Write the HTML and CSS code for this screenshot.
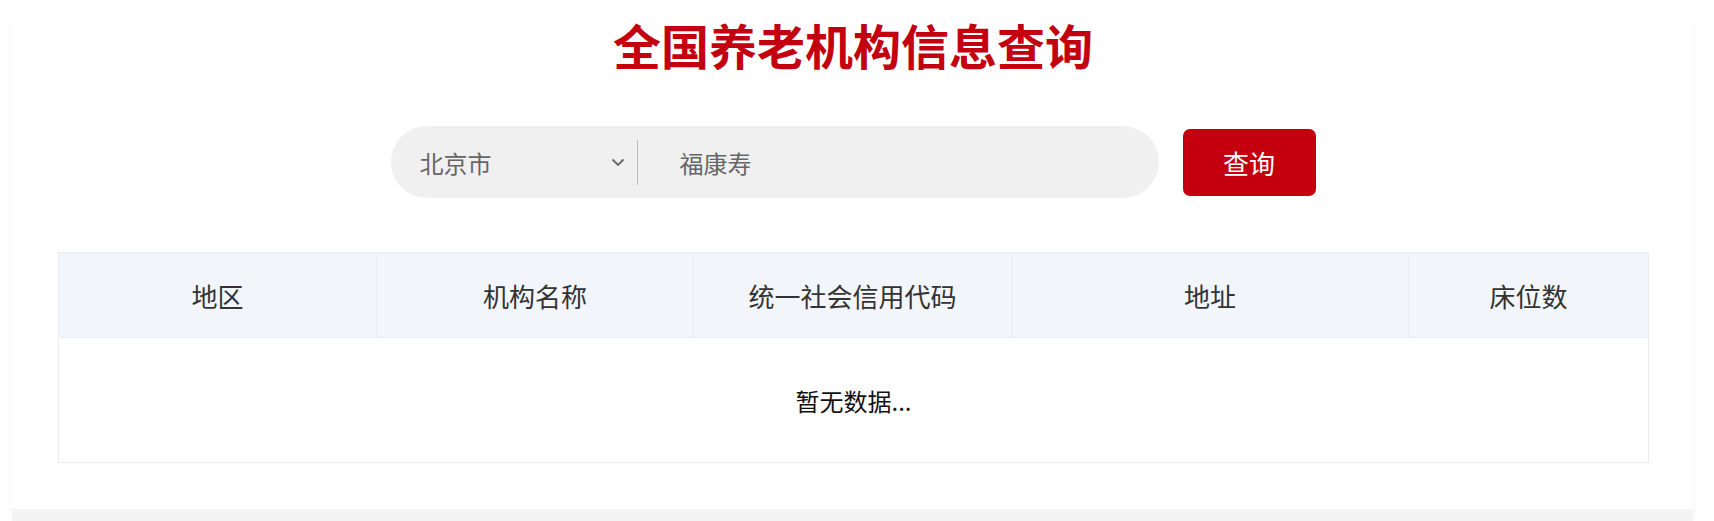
FILE: index.html
```html
<!DOCTYPE html>
<html lang="zh-CN">
<head>
  <meta charset="UTF-8">
  <title>全国养老机构信息查询</title>
  <link rel="stylesheet" href="styles.css">
</head>
<body>
  <div class="card">
    <h1 class="title">全国养老机构信息查询</h1>

    <div class="search-row">
      <div class="search-box">
        <div class="region-select">
          <span class="region-name">北京市</span>
          <svg class="chevron" width="14" height="9" viewBox="0 0 14 9">
            <path d="M1.5 1.5 L7 7 L12.5 1.5" fill="none" stroke="#666" stroke-width="1.8"/>
          </svg>
        </div>
        <span class="divider"></span>
        <input class="keyword" type="text" value="福康寿">
      </div>
      <button class="search-btn">查询</button>
    </div>

    <table class="result-table">
      <colgroup>
        <col class="col-area">
        <col class="col-name">
        <col class="col-code">
        <col class="col-addr">
        <col class="col-beds">
      </colgroup>
      <thead>
        <tr>
          <th>地区</th>
          <th>机构名称</th>
          <th>统一社会信用代码</th>
          <th>地址</th>
          <th>床位数</th>
        </tr>
      </thead>
      <tbody>
        <tr>
          <td class="empty" colspan="5">暂无数据...</td>
        </tr>
      </tbody>
    </table>
  </div>

  <div class="bottom-strip"></div>
</body>
</html>
```

FILE: styles.css
```css
* {
  box-sizing: border-box;
}

body {
  margin: 0;
  padding: 0;
  background: #fff;
  font-family: "Noto Sans CJK SC", "Noto Sans", sans-serif;
  color: #333;
}

.card {
  width: 1681px;
  margin: 16px 0 0 12px;
  padding: 0 45px 46px 46px;
  background: #fff;
  box-shadow: 0 8px 8px rgba(0, 0, 0, 0.05);
}

.title {
  margin: 0;
  font-size: 48px;
  line-height: 56px;
  font-weight: 700;
  text-align: center;
  color: #c3000f;
}

.search-row {
  display: flex;
  justify-content: center;
  align-items: center;
  gap: 24px;
  margin-top: 54px;
}

.search-box {
  display: flex;
  align-items: center;
  width: 768px;
  height: 72px;
  border-radius: 36px;
  background: #f0f0f0;
}

.region-select {
  display: flex;
  align-items: center;
  justify-content: space-between;
  width: 246px;
  padding: 0 12px 0 29px;
  font-size: 24px;
  color: #666;
}

.chevron {
  display: block;
}

.divider {
  width: 1px;
  height: 45px;
  background: #bdbdbd;
}

.keyword {
  flex: 1;
  margin-left: 40px;
  border: none;
  background: transparent;
  font-family: inherit;
  font-size: 24px;
  color: #666;
  outline: none;
}

.search-btn {
  width: 133px;
  height: 67px;
  border: none;
  border-radius: 7px;
  background: #c4000f;
  color: #fff;
  font-family: inherit;
  font-size: 26px;
  cursor: pointer;
}

.result-table {
  width: 100%;
  margin-top: 54px;
  border-collapse: collapse;
  table-layout: fixed;
}

.col-area { width: 318px; }
.col-name { width: 317px; }
.col-code { width: 318px; }
.col-addr { width: 397px; }
.col-beds { width: 240px; }

.result-table th {
  height: 85px;
  padding: 0;
  background: #f2f5fa;
  border: 1px solid #e9edf2;
  font-size: 26px;
  font-weight: 400;
  color: #333;
}

.result-table td {
  border: 1px solid #e9edf2;
}

.empty {
  height: 125px;
  text-align: center;
  font-size: 24px;
  color: #111;
}

.bottom-strip {
  width: 1681px;
  height: 14px;
  margin-left: 12px;
  background: #f4f4f4;
}
```
